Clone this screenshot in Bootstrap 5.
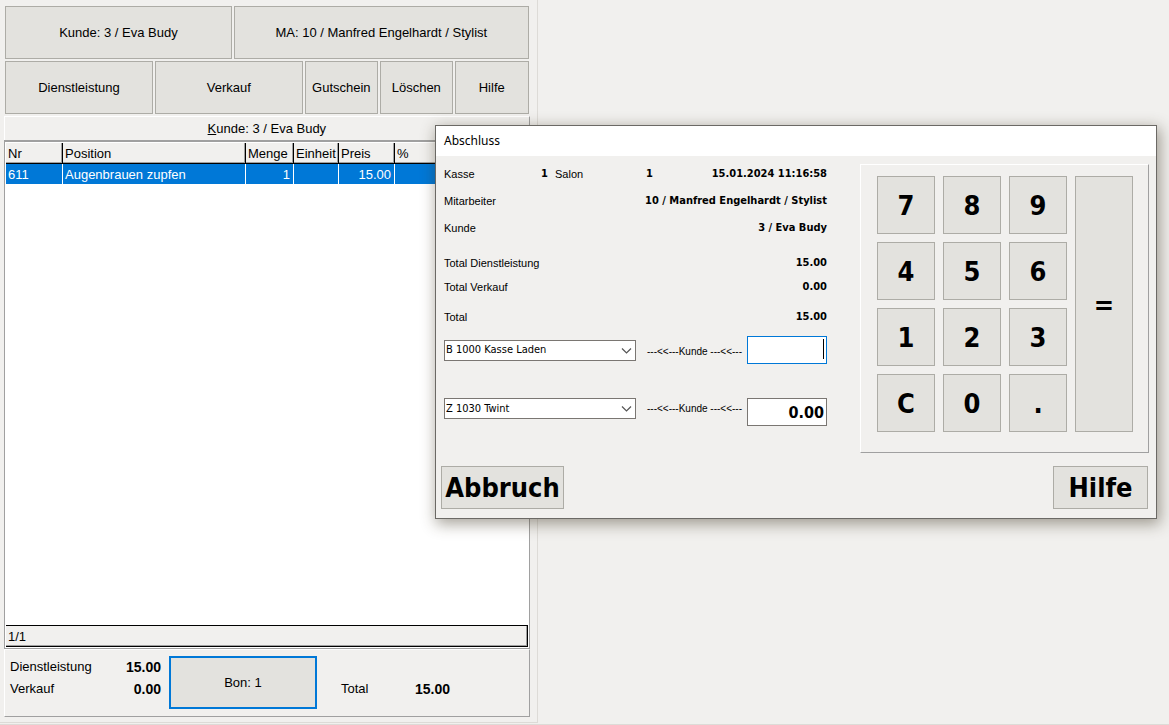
<!DOCTYPE html>
<html lang="de">
<head>
<meta charset="utf-8">
<meta name="viewport" content="width=device-width, initial-scale=1">
<title>Abschluss</title>
<link href="https://cdn.jsdelivr.net/npm/bootstrap@5.3.0/dist/css/bootstrap.min.css" rel="stylesheet">
<style>
  :root { --face: #f1f0ee; --key: #e3e2de; --edge: #adaca6; --shade: #a0a0a0; --accent: #0078d7; }
  body { background: var(--face); color: #000; font: 13px/16px "Liberation Sans", Arial, sans-serif; border-bottom: 1px solid #dddbd7; padding-bottom: 1px; }
  .register { flex: 0 0 46%; min-width: 0; padding: 6px 7px 5px 4px; border-right: 1px solid #dddbd7; border-bottom: 1px solid #dddbd7; }
  .btn-face { --bs-btn-bg: var(--key); --bs-btn-border-color: var(--edge); --bs-btn-color: #000; --bs-btn-hover-bg: #e5f1fb; --bs-btn-hover-border-color: var(--accent); --bs-btn-border-radius: 0; --bs-btn-padding-x: 0; --bs-btn-padding-y: 0; --bs-btn-font-size: 13px; --bs-btn-line-height: 16px; }
  .bar { display: grid; gap: 2px; height: 53px; margin: 0 1px 2px; }
  .bar-top { grid-template-columns: 227fr 295fr; }
  .bar-main { grid-template-columns: 148fr 148fr 73fr 73fr 74fr; }
  .raised { border: 1px solid; border-color: #fff var(--shade) var(--shade) #fff; }
  .caption { height: 24px; border-bottom: 0; }
  .positions { border: 1px solid var(--shade); border-top-width: 2px; background: #fff; padding: 1px 1px 0; }
  .grid-table { table-layout: fixed; width: 100%; border-collapse: separate; border-spacing: 0; }
  .grid-table th { height: 21px; padding: 1px 0 0 2px; font-weight: 400; background: var(--face); border-right: 1px solid #000; border-bottom: 1px solid #000; box-shadow: inset -1px -1px var(--shade); white-space: nowrap; }
  .grid-table td { height: 20px; padding: 1px 3px 0 2px; background: var(--accent); color: #fff; border-right: 1px solid #fff; }
  .grid-table th:last-child, .grid-table td:last-child { border-right: 0; }
  .status { height: 22px; border: 1px solid #000; border-left: 0; background: var(--face); box-shadow: inset -1px -1px var(--shade); padding: 3px 2px 0; margin-bottom: 1px; }
  .sums { height: 68px; }
  .sums-grid { display: grid; grid-template-columns: 88px 63px; align-content: start; row-gap: 6px; padding: 9px 0 0 5px; }
  .sums-total { grid-template-columns: 74px auto; padding: 31px 0 0 24px; }
  .bon { width: 148px; height: 53px; margin: 6px 0 0 8px; --bs-btn-border-width: 2px; --bs-btn-border-color: var(--accent); }
  .num { font-weight: 700; text-align: right; }
  .sums .num { font-size: 14px; }

  .dialog { position: absolute; top: 125px; left: 435px; right: 12px; min-width: 722px; background: var(--face); border: 1px solid #6b6965; box-shadow: 2px 4px 14px 1px rgba(60, 50, 30, .45); font-size: 11px; line-height: 16px; }
  .dialog-title { height: 30px; background: #fff; padding: 7px 8px; font: 12px/16px "Noto Sans", sans-serif; }
  .dialog-main { padding: 8px 7px 0 8px; }
  .entries { width: 383px; padding-top: 2px; }
  .entries .num { font: bold 11px/16px "DejaVu Sans Condensed", "DejaVu Sans", sans-serif; }
  .line { display: flex; justify-content: space-between; margin-bottom: 11px; }
  .line-tight { margin-bottom: 8px; }
  .line-subtotal { margin-bottom: 14px; }
  .line-group { margin-bottom: 19px; }
  .line-kasse { display: grid; grid-template-columns: 60px 44px 52px 53px 1fr; }
  .salon { padding-left: 7px; }
  .pay { display: grid; grid-template-columns: 192px 1fr 80px; column-gap: 5px; height: 28px; }
  .pay-first { align-items: center; margin-bottom: 34px; }
  .pay .form-select { height: 21px; padding: 0 20px 0 1px; border: 1px solid #7a7672; border-radius: 0; color: #000; background-color: #fff; background-size: 11px 11px; background-position: right 3px center; font: 11px/16px "DejaVu Sans Condensed", "DejaVu Sans", sans-serif; background-image: url("data:image/svg+xml,%3csvg xmlns='http://www.w3.org/2000/svg' viewBox='0 0 11 11'%3e%3cpath fill='none' stroke='%23555' stroke-width='1.2' d='M1 3.5l4.5 4.5L10 3.5'/%3e%3c/svg%3e"); }
  .pay label { padding: 3px 0 0 6px; font-size: 10px; white-space: nowrap; }
  .pay .form-control { height: 28px; padding: 0 2px; border: 1px solid #7a7672; border-radius: 0; color: #000; background: #fff; text-align: right; font: bold 16px/20px "DejaVu Sans Condensed", "DejaVu Sans", sans-serif; }
  .pay .form-control.active { border-color: var(--accent); }
  .caret { position: absolute; right: 3px; top: 3px; width: 1px; height: 20px; background: #000; }
  .keypad { display: grid; grid-template: repeat(4, 58px) / repeat(4, 58px); gap: 8px; padding: 11px 15px 20px 16px; }
  .keypad .btn, .dialog-foot .btn { padding-top: 1px; font: bold 27px/32px "DejaVu Sans Condensed", "DejaVu Sans", sans-serif; }
  .key-enter { grid-area: 1 / 4 / 5 / 5; }
  .dialog-foot { padding: 13px 8px 9px 5px; }
  .dialog-foot .btn { height: 43px; width: 123px; }
  .dialog-foot .btn-help { width: 95px; }
</style>
</head>
<body class="d-flex min-vh-100">
<main class="register d-flex flex-column">
  <div class="bar bar-top">
    <button type="button" class="btn btn-face">Kunde: 3 / Eva Budy</button>
    <button type="button" class="btn btn-face">MA: 10 / Manfred Engelhardt / Stylist</button>
  </div>
  <div class="bar bar-main">
    <button type="button" class="btn btn-face">Dienstleistung</button>
    <button type="button" class="btn btn-face">Verkauf</button>
    <button type="button" class="btn btn-face">Gutschein</button>
    <button type="button" class="btn btn-face">Löschen</button>
    <button type="button" class="btn btn-face">Hilfe</button>
  </div>
  <div class="caption raised d-flex align-items-center justify-content-center"><span><u>K</u>unde: 3 / Eva Budy</span></div>
  <section class="positions d-flex flex-column flex-grow-1">
    <table class="grid-table">
      <colgroup><col style="width:57px"><col style="width:183px"><col style="width:48px"><col style="width:45px"><col style="width:56px"><col></colgroup>
      <thead><tr><th>Nr</th><th>Position</th><th>Menge</th><th>Einheit</th><th>Preis</th><th>%</th></tr></thead>
      <tbody><tr><td>611</td><td>Augenbrauen zupfen</td><td class="text-end">1</td><td></td><td class="text-end">15.00</td><td></td></tr></tbody>
    </table>
    <div class="status mt-auto">1/1</div>
  </section>
  <section class="sums raised d-flex">
    <div class="sums-grid">
      <span>Dienstleistung</span><span class="num">15.00</span>
      <span>Verkauf</span><span class="num">0.00</span>
    </div>
    <button type="button" class="btn btn-face bon">Bon: 1</button>
    <div class="sums-grid sums-total">
      <span>Total</span><span class="num">15.00</span>
    </div>
  </section>
</main>

<div class="dialog" role="dialog" aria-labelledby="dialogTitle">
  <div class="dialog-title" id="dialogTitle">Abschluss</div>
  <div class="dialog-main d-flex justify-content-between align-items-start">
    <form class="entries">
      <div class="line line-kasse"><span>Kasse</span><span class="num">1</span><span class="salon">Salon</span><span class="num">1</span><span class="num">15.01.2024 11:16:58</span></div>
      <div class="line"><span>Mitarbeiter</span><span class="num">10 / Manfred Engelhardt / Stylist</span></div>
      <div class="line line-group"><span>Kunde</span><span class="num">3 / Eva Budy</span></div>
      <div class="line line-tight"><span>Total Dienstleistung</span><span class="num">15.00</span></div>
      <div class="line line-subtotal"><span>Total Verkauf</span><span class="num">0.00</span></div>
      <div class="line"><span>Total</span><span class="num">15.00</span></div>
      <div class="pay pay-first">
        <select class="form-select" aria-label="Zahlungskonto 1"><option>B 1000 Kasse Laden</option></select>
        <label for="amount1">---&lt;&lt;---Kunde ---&lt;&lt;---</label>
        <div class="position-relative"><input class="form-control active" id="amount1" type="text"><span class="caret"></span></div>
      </div>
      <div class="pay">
        <select class="form-select" aria-label="Zahlungskonto 2"><option>Z 1030 Twint</option></select>
        <label for="amount2">---&lt;&lt;---Kunde ---&lt;&lt;---</label>
        <input class="form-control" id="amount2" type="text" value="0.00">
      </div>
    </form>
    <div class="keypad raised">
      <button type="button" class="btn btn-face">7</button><button type="button" class="btn btn-face">8</button><button type="button" class="btn btn-face">9</button>
      <button type="button" class="btn btn-face key-enter">=</button>
      <button type="button" class="btn btn-face">4</button><button type="button" class="btn btn-face">5</button><button type="button" class="btn btn-face">6</button>
      <button type="button" class="btn btn-face">1</button><button type="button" class="btn btn-face">2</button><button type="button" class="btn btn-face">3</button>
      <button type="button" class="btn btn-face">C</button><button type="button" class="btn btn-face">0</button><button type="button" class="btn btn-face">.</button>
    </div>
  </div>
  <div class="dialog-foot d-flex justify-content-between">
    <button type="button" class="btn btn-face">Abbruch</button>
    <button type="button" class="btn btn-face btn-help">Hilfe</button>
  </div>
</div>
<script src="https://cdn.jsdelivr.net/npm/bootstrap@5.3.0/dist/js/bootstrap.bundle.min.js"></script>
</body>
</html>
